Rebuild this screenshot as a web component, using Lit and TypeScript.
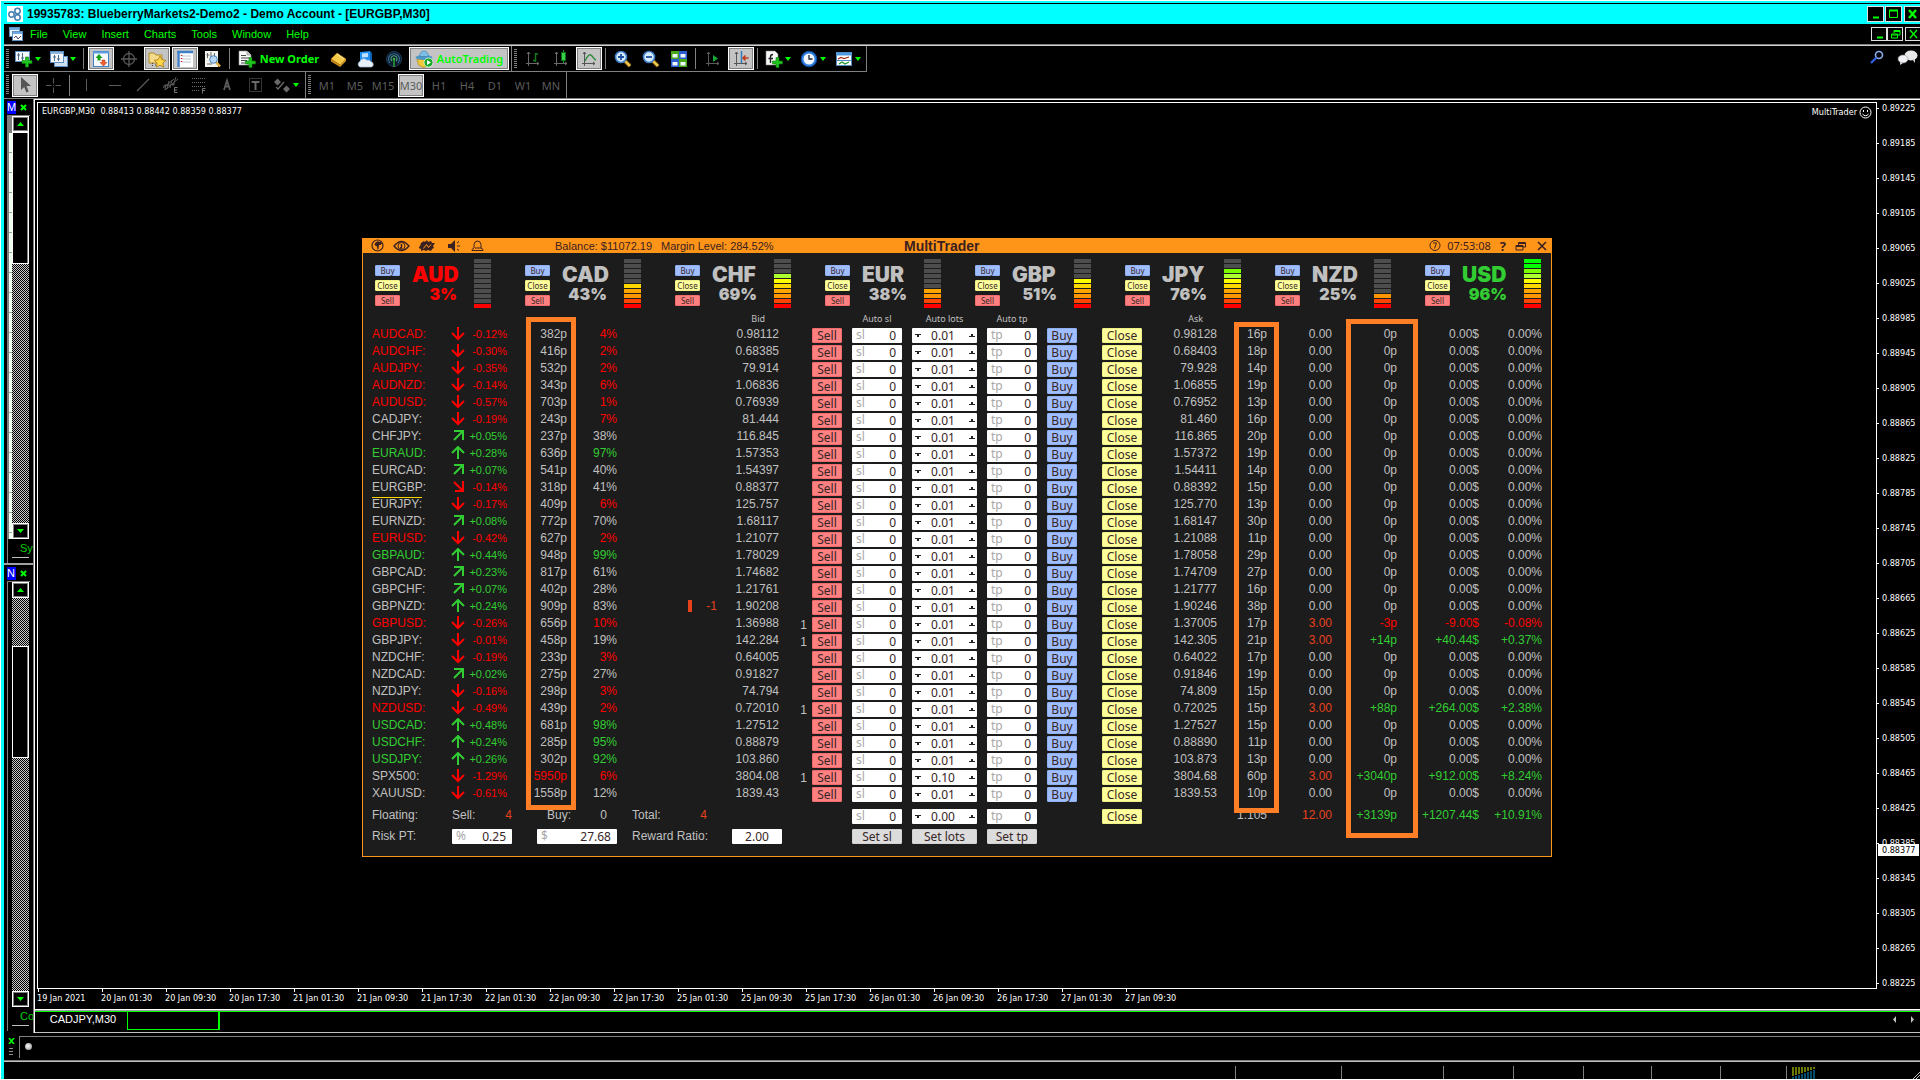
import { LitElement, html, css, svg, nothing, TemplateResult } from "lit";
import { customElement, property } from "lit/decorators.js";
import { classMap } from "lit/directives/class-map.js";

type Tone = "r" | "g" | "n";

interface Position {
  lots: string;
  pips: string;
  profit: string;
  pct: string;
}

interface Pair {
  symbol: string;
  tone: Tone;
  trend: "d" | "u" | "ne" | "se";
  change: string;
  range: string;
  strength: number;
  bid: string;
  ask: string;
  spread: string;
  count?: string;
  lots?: string;
  open?: Position;
  signal?: string;
  current?: boolean;
}

const pair = (line: string, extra: Partial<Pair> = {}): Pair => {
  const [symbol, tone, trend, change, range, strength, bid, ask, spread] = line.split(" ");
  return {
    symbol, change, range, bid, ask, spread,
    tone: tone as Tone,
    trend: trend as Pair["trend"],
    strength: Number(strength),
    ...extra,
  };
};

const PAIRS: Pair[] = [
  pair("AUDCAD r d -0.12% 382p 4 0.98112 0.98128 16p"),
  pair("AUDCHF r d -0.30% 416p 2 0.68385 0.68403 18p"),
  pair("AUDJPY r d -0.35% 532p 2 79.914 79.928 14p"),
  pair("AUDNZD r d -0.14% 343p 6 1.06836 1.06855 19p"),
  pair("AUDUSD r d -0.57% 703p 1 0.76939 0.76952 13p"),
  pair("CADJPY n d -0.19% 243p 7 81.444 81.460 16p"),
  pair("CHFJPY n ne +0.05% 237p 38 116.845 116.865 20p"),
  pair("EURAUD g u +0.28% 636p 97 1.57353 1.57372 19p"),
  pair("EURCAD n ne +0.07% 541p 40 1.54397 1.54411 14p"),
  pair("EURGBP n se -0.14% 318p 41 0.88377 0.88392 15p", { current: true }),
  pair("EURJPY n d -0.17% 409p 6 125.757 125.770 13p"),
  pair("EURNZD n ne +0.08% 772p 70 1.68117 1.68147 30p"),
  pair("EURUSD r d -0.42% 627p 2 1.21077 1.21088 11p"),
  pair("GBPAUD g u +0.44% 948p 99 1.78029 1.78058 29p"),
  pair("GBPCAD n ne +0.23% 817p 61 1.74682 1.74709 27p"),
  pair("GBPCHF n ne +0.07% 402p 28 1.21761 1.21777 16p"),
  pair("GBPNZD n u +0.24% 909p 83 1.90208 1.90246 38p", { signal: "-1" }),
  pair("GBPUSD r d -0.26% 656p 10 1.36988 1.37005 17p", { count: "1", open: { lots: "3.00", pips: "-3p", profit: "-9.00$", pct: "-0.08%" } }),
  pair("GBPJPY n d -0.01% 458p 19 142.284 142.305 21p", { count: "1", open: { lots: "3.00", pips: "+14p", profit: "+40.44$", pct: "+0.37%" } }),
  pair("NZDCHF n d -0.19% 233p 3 0.64005 0.64022 17p"),
  pair("NZDCAD n ne +0.02% 275p 27 0.91827 0.91846 19p"),
  pair("NZDJPY n d -0.16% 298p 3 74.794 74.809 15p"),
  pair("NZDUSD r d -0.49% 439p 2 0.72010 0.72025 15p", { count: "1", open: { lots: "3.00", pips: "+88p", profit: "+264.00$", pct: "+2.38%" } }),
  pair("USDCAD g u +0.48% 681p 98 1.27512 1.27527 15p"),
  pair("USDCHF g u +0.24% 285p 95 0.88879 0.88890 11p"),
  pair("USDJPY g u +0.26% 302p 92 103.860 103.873 13p"),
  pair("SPX500 n d -1.29% 5950p 6 3804.08 3804.68 60p", { count: "1", lots: "0.10", open: { lots: "3.00", pips: "+3040p", profit: "+912.00$", pct: "+8.24%" } }),
  pair("XAUUSD n d -0.61% 1558p 12 1839.43 1839.53 10p"),
];

const CURRENCIES: { name: string; pct: number; level: number; tone: Tone }[] = [
  { name: "AUD", pct: 3, level: 1, tone: "r" },
  { name: "CAD", pct: 43, level: 5, tone: "n" },
  { name: "CHF", pct: 69, level: 7, tone: "n" },
  { name: "EUR", pct: 38, level: 4, tone: "n" },
  { name: "GBP", pct: 51, level: 6, tone: "n" },
  { name: "JPY", pct: 76, level: 8, tone: "n" },
  { name: "NZD", pct: 25, level: 3, tone: "n" },
  { name: "USD", pct: 96, level: 10, tone: "g" },
];

const METER = ["#ff0000", "#ff4500", "#ff9500", "#ffa500", "#ffd700", "#ffff00", "#adff2f", "#7cfc00", "#00ff00", "#00ff00"];

const TIMES = [
  "19 Jan 2021", "20 Jan 01:30", "20 Jan 09:30", "20 Jan 17:30", "21 Jan 01:30", "21 Jan 09:30",
  "21 Jan 17:30", "22 Jan 01:30", "22 Jan 09:30", "22 Jan 17:30", "25 Jan 01:30", "25 Jan 09:30",
  "25 Jan 17:30", "26 Jan 01:30", "26 Jan 09:30", "26 Jan 17:30", "27 Jan 01:30", "27 Jan 09:30",
];

const PRICE_TOP = 0.89225;
const PRICE_STEP = 0.0004;
const PRICES = Array.from({ length: 26 }, (_, i) => (PRICE_TOP - i * PRICE_STEP).toFixed(5));
const PRICE_NOW = 0.88377;

const signTone = (s: string): Tone => (s.startsWith("-") ? "r" : s.startsWith("+") ? "g" : "n");

/* ---------- icons ---------- */

const axes = (c = "#6a6a6a") => svg`<path d="M4.500 2v14M2 13.500h13M3 4l1.500-2L6 4M13 12l2 1.500-2 1.500" fill="none" stroke=${c}/>`;
const lens = (mark: string) => svg`
  <path d="M11 11l5 5" stroke="#7a5a10" stroke-width="4"/><path d="M11 11l5 5" stroke="#f0c850" stroke-width="2.400"/>
  <circle cx="7" cy="7" r="5.500" fill="#d8ecff" stroke="#3f7fc8" stroke-width="1.600"/>
  <path d=${mark} stroke="#1f4f9f" stroke-width="1.800" fill="none"/>`;
const plus = (x: number, y: number) => svg`<g transform="translate(${x} ${y})"><path d="M3.500 0h3v3.500H10v3H6.500V10h-3V6.500H0v-3h3.500z" fill="#1fc41f" stroke="#0a7a0a" stroke-width=".6"/></g>`;

const ICONS: Record<string, TemplateResult<2>> = {
  newChart: svg`<rect x="0.500" y="1.500" width="14" height="10" fill="#f4f8fc" stroke="#5c8fc0"/><path d="M3.500 3v7M7.500 3v7M2 5h3M6 8h3" stroke="#4a6a8a" fill="none"/>${plus(7, 7)}`,
  profiles: svg`<rect x="4.500" y="6.500" width="13" height="10" fill="#cfe0f0" stroke="#5c8fc0"/><rect x="0.500" y="1.500" width="13" height="11" fill="#f4f8fc" stroke="#5c8fc0"/><path d="M1 3h12" stroke="#8fb8e0" stroke-width="2"/><path d="M4.500 5v6M8.500 5v6M3 7h3M7 9h3" stroke="#4a6a8a"/>`,
  market: svg`<rect x="1.500" y="1.500" width="15" height="15" fill="#f6faff" stroke="#3f7fc8"/><path d="M1 2.500h16" stroke="#5f9fe0" stroke-width="2"/><path d="M7 4l3.500 4H8.500v2.500h-3V8h-2z" fill="#18a018"/><path d="M11.500 16L8 12.500h2V10h3v2.500h2z" fill="#f06030" stroke="#b03010" stroke-width=".5"/>`,
  cross: svg`<circle cx="9" cy="9" r="5.500" fill="none" stroke="#5a5a5a" stroke-width="1.300"/><path d="M9 1v16M1 9h16" stroke="#5a5a5a" stroke-width="1.300"/>`,
  star: svg`<path d="M1 3h5l2 2h6v8H1z" fill="#f4dc8c" stroke="#b08820"/><path d="M4.500 13v4M7 15h2" stroke="#444" stroke-dasharray="1 1"/><path d="M12 6l1.800 3.700 4 .6-2.900 2.800.7 4-3.600-1.900L8.400 17l.7-4-2.900-2.700 4-.6z" fill="#ffd84a" stroke="#a87808" stroke-width=".8"/>`,
  navigator: svg`<rect x="1" y="1" width="16" height="16" fill="#fff"/><path d="M1 2h16M2.500 1v16" stroke="#3f7fc8" stroke-width="2.500"/><path d="M6 6h9M6 9h9M6 12h9" stroke="#b8c4d0"/><path d="M5.500 5v1M5.500 8v1M5.500 11v1" stroke="#d02020" stroke-width="1.500"/>`,
  tester: svg`<rect x="1" y="1" width="13" height="16" fill="#f4f4f0"/><path d="M3.500 3v5M2.500 5h3M7 2v5M10.500 3v4M3 14h5" stroke="#666"/><path d="M12 12l4 4.500" stroke="#e0b040" stroke-width="2.600"/><circle cx="9.500" cy="9.500" r="3.800" fill="#a8d0f8" fill-opacity=".85" stroke="#5080b8"/>`,
  order: svg`<path d="M1 1h8l4 4v10H1z" fill="#fafafa" stroke="#999" stroke-width=".6"/><path d="M9 1v4h4" fill="#ccc" stroke="#888" stroke-width=".6"/><path d="M3 5.500h5M3 8h8M3 10.500h6M3 13h4" stroke="#444"/>${plus(7.500, 7.500)}`,
  gold: svg`<path d="M2 9l6-6 9 6-6 6z" fill="#f4c848" stroke="#a87010" stroke-width=".8"/><path d="M2 9l9 6v2L2 11.500z" fill="#c88818"/><path d="M11 15l6-6v2l-6 6z" fill="#e0a428"/><path d="M8 4l7 5" stroke="#fff0a8"/>`,
  cloud: svg`<path d="M3 2l10-1v10H3z" fill="#1f8ff0"/><path d="M5 3.500l6-.5v4l-6 .5z" fill="#bfe0ff"/><path d="M13 1l2 2v9h-2z" fill="#0f5fb0"/><path d="M3 17a3 3 0 010-5.500 4 4 0 017-1.200 3.500 3.500 0 014 1.500 2.700 2.700 0 01.5 5.200z" fill="#e8f0fa" stroke="#a8bcd4" stroke-width=".7"/>`,
  signal: svg`<circle cx="9" cy="9" r="7.500" fill="#0c1c2c" stroke="#1c3c5c"/><path d="M5 13a5.500 5.500 0 118 0" fill="none" stroke="#3a6a90" stroke-width="1.200"/><path d="M7 11a3 3 0 114 0" fill="none" stroke="#4a9a80" stroke-width="1.200"/><circle cx="9" cy="9" r="1.300" fill="#40c040"/><path d="M9 9v8" stroke="#30a030" stroke-width="1.500"/>`,
  robot: svg`<path d="M2 9h14l-2.500 7L8 17.500 3.500 15z" fill="#f0c838" stroke="#a88010" stroke-width=".6"/><ellipse cx="9" cy="7.500" rx="8.500" ry="2.500" fill="#4f98c8"/><path d="M4.500 6.500Q5 1 9 1t4.500 5.500z" fill="#7cc0e8" stroke="#3878a8" stroke-width=".6"/><circle cx="13.500" cy="12.500" r="4.500" fill="#18a828" stroke="#e8ffe8" stroke-width=".8"/><path d="M12 10l4 2.500-4 2.500z" fill="#fff"/>`,
  bars: svg`${axes()}<path d="M11.500 3v9M11.500 4h2.500M9 10.500h2.500" stroke="#14781c" stroke-width="1.500"/>`,
  candles: svg`${axes()}<path d="M11.500 0v13" stroke="#18a828"/><rect x="9.500" y="2.500" width="4" height="8" fill="#38d048" stroke="#0c7018"/>`,
  line: svg`${axes("#555")}<path d="M5 11q4-9 7-5t4 4" fill="none" stroke="#2a8a3a" stroke-width="1.400"/>`,
  zoomIn: lens("M7 4v6M4 7h6"),
  zoomOut: lens("M4 7h6"),
  tile: svg`<rect x="1" y="1" width="8" height="8" fill="#48a818"/><rect x="9" y="1" width="8" height="8" fill="#2c5cd0"/><rect x="1" y="9" width="8" height="8" fill="#2c5cd0"/><rect x="9" y="9" width="8" height="8" fill="#48a818"/><path d="M2.500 4h5v3.500h-5zM10.500 4h5v3.500h-5zM2.500 12h5v3.500h-5zM10.500 12h5v3.500h-5z" fill="#eef6ff"/>`,
  scroll: svg`${axes("#5c5c5c")}<path d="M9 5l5 3.500L9 12z" fill="#18a838"/>`,
  shift: svg`${axes("#555")}<path d="M9.500 1v12" stroke="#2c7cc0" stroke-width="1.500"/><path d="M16.500 8h-5M13.500 5.500L11 8l2.500 2.500" fill="none" stroke="#c03818" stroke-width="1.500"/>`,
  indicator: svg`<path d="M1 1h9l3 3v11H1z" fill="#f8f8f8" stroke="#888" stroke-width=".6"/><path d="M5.500 13V7q0-2.500 2.500-2.500M3.500 8.500H8" stroke="#222" stroke-width="1.400" fill="none"/>${plus(7.500, 7.500)}`,
  clock: svg`<circle cx="9" cy="9" r="7.800" fill="#2f7fe0" stroke="#10489c"/><circle cx="9" cy="9" r="5.500" fill="#f4f8ff"/><path d="M9 5v4h3.500" fill="none" stroke="#223" stroke-width="1.300"/>`,
  template: svg`<rect x="1.500" y="2.500" width="15" height="13" fill="#fff" stroke="#4f88c0"/><path d="M1 4h16" stroke="#4f98e0" stroke-width="3"/><path d="M3 9l3-1.500 3 1 5-1.500" fill="none" stroke="#a02818" stroke-width="1.300"/><path d="M2 10.500h14" stroke="#4f88c0"/><path d="M4 14l3-2 3 2 4-2" fill="none" stroke="#189828" stroke-width="1.300"/>`,
  pointer: svg`<path d="M5 1v13l3.200-3 2.200 5.500 2.300-1L10.500 10H15z" fill="#555"/>`,
  plusThin: svg`<path d="M9.500 2v5.500M9.500 11.500V17M2 9.500h5.500M11.500 9.500H17M9 9.500h1" stroke="#5a5a5a"/>`,
  vline: svg`<path d="M8.500 3v12" stroke="#5a5a5a"/>`,
  hline: svg`<path d="M3 9.500h12" stroke="#5a5a5a"/>`,
  trend: svg`<path d="M3 15L15 3" stroke="#5a5a5a" stroke-width="1.300"/>`,
  channel: svg`<path d="M1 12L12 3M3 14L16 3M4 8l-1 6M7 5L5 13M10 4L8 12M14 1l-3 9M1 10l12-2" stroke="#5a5a5a"/><path d="M15.500 11.500h-3v5h3M12.500 14h2.500" stroke="#777" fill="none"/>`,
  fibo: svg`<path d="M2 2.500h13M2 6.500h13M2 10.500h13M2 14.500h8" stroke="#6a6a6a" stroke-dasharray="1 1"/><path d="M15.500 12.500h-3v5M12.500 14.500h2.500" stroke="#777" fill="none"/>`,
  letter: svg`<path d="M6 14L9 4.500 12 14M7 10.500h4" stroke="#5a5a5a" stroke-width="1.800" fill="none"/>`,
  label: svg`<rect x="3.500" y="2.500" width="12" height="13" fill="none" stroke="#6a6a6a" stroke-dasharray="1 1"/><path d="M5.500 6h8M9.500 6v8" stroke="#6a6a6a" stroke-width="2"/>`,
  shapes: svg`<path d="M1 6l3.500-3.500L8 6 4.500 9.500zM10 13l3.500-3.500L17 13l-3.500 3.500z" fill="#6a6a6a"/><path d="M3 11l2 2 6-7" stroke="#6a6a6a" fill="none" stroke-width="1.300"/>`,
};

const icon = (name: string) => html`<svg class="ico" width="18" height="18" viewBox="0 0 18 18" aria-hidden="true">${ICONS[name]}</svg>`;
const caret = html`<svg class="caret" width="6" height="4" viewBox="0 0 6 4" aria-hidden="true"><path d="M0 0h6L3 4z" fill="#00ff00"/></svg>`;

const TREND: Record<Pair["trend"], TemplateResult<2>> = {
  d: svg`<path d="M7 0v12M1 6l6 6 6-6"/>`,
  u: svg`<path d="M7 13V1M1 7l6-6 6 6"/>`,
  ne: svg`<path d="M3 11l9-9M3 2h9v9"/>`,
  se: svg`<path d="M3 2l9 9M12 1v10H4"/>`,
};

/* ---------- MultiTrader window ---------- */

@customElement("multi-trader")
export class MultiTrader extends LitElement {
  static styles = css`
    :host { display: block; position: relative; box-sizing: border-box; width: 1190px; border: 1px solid #ff9518; background: #1c1c1c; color: #c0c0c0; font: 12px/12px "Liberation Sans", Arial, sans-serif; }
    button, input { font: 12px/13px "Noto Sans", sans-serif; color: #372626; margin: 0; padding: 0; box-sizing: border-box; }
    button { display: block; height: 15px; border: 1px solid; border-radius: 1px; text-align: center; white-space: nowrap; }
    input { border: 0; background: transparent; min-width: 0; width: 100%; text-align: right; outline: 0; height: 15px; }
    .buy { background: #a0beff; border-color: #90b0f4; }
    .sell { background: #ff8080; border-color: #f06c6c; }
    .close { background: #ffff9c; border-color: #f0f088; }
    .set { background: #dcdcdc; border-color: #d2d2d2; width: 100%; }
    .r { color: #ff0000; } .g { color: #32cd32; } .n { color: #c0c0c0; } .o { color: #e8421c; }

    .bar { display: grid; grid-template-columns: 192px 349px 1fr auto; align-items: center; height: 14px; background: #ff9518; color: #3a2020; }
    .tools { display: flex; align-items: center; padding-left: 8px; gap: 9px; }
    .bar button { border: 0; background: none; height: 14px; display: flex; align-items: center; color: inherit; }
    .bar svg { display: block; }
    .money { display: flex; gap: 9px; font-size: 11px; }
    .money span { white-space: nowrap; }
    .name { font: 700 14px/14px "Liberation Sans", Arial, sans-serif; margin: 0; }
    .right { display: flex; align-items: center; gap: 9px; padding-right: 3px; font: 11px/14px "Noto Sans", sans-serif; }
    .time { display: flex; align-items: center; gap: 6px; }
    .bar .help { font: 700 13px/14px "Noto Sans", sans-serif; }

    .cards { display: flex; justify-content: space-between; padding: 6px 10px 0 12px; }
    .card { display: grid; grid-template-columns: 25px 45px 17px; column-gap: 12px; width: 116px; height: 50px; }
    .trio { display: grid; gap: 4px; align-content: start; padding-top: 6px; }
    .trio button { height: 11px; width: 25px; font-size: 8px; line-height: 9px; }
    .score { display: flex; flex-direction: column; align-items: flex-end; padding-top: 6px; font-family: Inter, "Liberation Sans", sans-serif; font-weight: 900; }
    .ccy { align-self: flex-start; font-size: 21px; line-height: 19px; }
    .pct { font-size: 16px; line-height: 20px; }
    .meter { display: grid; grid-auto-rows: 4px; gap: 1px; margin-left: 5px; width: 17px; }
    .meter i { background: #4d4d4d; }

    table { width: 1170px; margin: 0 9px; table-layout: fixed; border-collapse: collapse; border-spacing: 0; }
    th, td { padding: 0; text-align: right; vertical-align: top; font-weight: 400; white-space: nowrap; }
    thead th { height: 19px; font: 9px/19px "Noto Sans", sans-serif; }
    thead .mid { text-align: center; padding-right: 10px; }
    thead .inset { padding-right: 14px; }
    tbody tr { height: 17px; }
    tbody th { text-align: left; }
    .sym { display: block; }
    .sym.current { box-sizing: border-box; width: 50px; height: 17px; border-bottom: 1px solid #ffd700; }
    .chg { display: flex; justify-content: space-between; align-items: center; height: 12px; font-size: 11px; }
    .chg svg, .sig i { flex: none; }
    .chg svg { fill: none; stroke: currentColor; stroke-width: 2; }
    .sig { display: flex; justify-content: flex-end; gap: 14px; }
    .sig i { width: 4px; height: 12px; background: #e8421c; }
    .count { padding-right: 5px; line-height: 16px; }
    .w30 { width: 30px; } .w40 { width: 40px; }
    .box { display: flex; align-items: center; box-sizing: border-box; height: 15px; background: #fff; border-radius: 1px; padding: 0 6px 0 4px; color: #a8a8a8; font: 12px/14px "Noto Sans", sans-serif; }
    .in { padding-right: 10px; }
    .lots { padding: 0 2px 0 3px; }
    .lots input { text-align: center; padding-right: 4px; }
    .lots button { border: 0; background: none; width: 6px; flex: none; display: flex; align-items: center; }
    tfoot td { height: 20px; }
    tfoot tr:first-child td { padding-top: 5px; height: 15px; }
    tfoot tr:last-child td { padding-top: 5px; height: 27px; }
    tfoot .in { padding-right: 10px; }
    .sums, .risk { display: grid; text-align: left; line-height: 13px; }
    .sums { grid-template-columns: 80px 60px 60px 75px; }
    .sums > :nth-child(3) { margin-left: 35px; margin-right: -35px; }
    .sums > :nth-child(4) { margin-left: 60px; margin-right: -60px; }
    .sums div { display: flex; justify-content: space-between; }
    .risk { grid-template-columns: 80px 60px 80px 75px 50px; line-height: 15px; column-gap: 0; }
    .risk > :nth-child(3) { margin-left: 25px; margin-right: -25px; }
    .risk > :nth-child(4) { margin-left: 40px; }
    .risk > :nth-child(5) { margin-left: 65px; margin-right: -65px; }
    .ratio { padding: 0; }
    .ratio input { text-align: center; }
    .mark { position: absolute; box-sizing: border-box; border: 5px solid #ff7f27; pointer-events: none; }
    .mark.range { left: 163px; top: 78px; width: 50px; height: 493px; }
    .mark.spread { left: 871px; top: 83px; width: 45px; height: 491px; }
    .mark.pips { left: 983px; top: 80px; width: 72px; height: 519px; }
  `;

  private widths = [79, 56, 60, 50, 100, 62, 33, 40, 60, 75, 60, 55, 50, 65, 50, 65, 65, 82, 63];

  private field(prefix: string, value: string) {
    return html`<label class="box"><span>${prefix}</span><input .value=${value} /></label>`;
  }

  private lots(value: string) {
    return html`<div class="box lots">
      <button aria-label="Less"><svg width="6" height="3" viewBox="0 0 6 3"><path d="M0 0h6v1H4v2H2V1H0z" fill="#222"/></svg></button>
      <input aria-label="Lots" .value=${value} />
      <button aria-label="More"><svg width="6" height="3" viewBox="0 0 6 3"><path d="M0 3h6V2H4V0H2v2H0z" fill="#222"/></svg></button>
    </div>`;
  }

  private row(p: Pair) {
    const s: Tone = p.strength <= 10 ? "r" : p.strength >= 90 ? "g" : "n";
    const o = p.open;
    return html`<tr>
      <th scope="row"><span class=${classMap({ sym: true, [p.tone]: true, current: !!p.current })}>${p.symbol}:</span></th>
      <td><span class="chg ${signTone(p.change)}"><svg width="16" height="14" viewBox="0 0 16 14">${TREND[p.trend]}</svg>${p.change}</span></td>
      <td class=${p.range === "5950p" ? "r" : "n"}>${p.range}</td>
      <td class=${s}>${p.strength}%</td>
      <td class="o">${p.signal ? html`<span class="sig"><i></i>${p.signal}</span>` : nothing}</td>
      <td>${p.bid}</td>
      <td class="count">${p.count ?? nothing}</td>
      <td><button class="sell w30">Sell</button></td>
      <td class="in">${this.field("sl", "0")}</td>
      <td class="in">${this.lots(p.lots ?? "0.01")}</td>
      <td class="in">${this.field("tp", "0")}</td>
      <td><button class="buy w30">Buy</button></td>
      <td><button class="close w40">Close</button></td>
      <td>${p.ask}</td>
      <td>${p.spread}</td>
      <td class=${o ? "o" : "n"}>${o ? o.lots : "0.00"}</td>
      <td class=${signTone(o?.pips ?? "")}>${o?.pips ?? "0p"}</td>
      <td class=${signTone(o?.profit ?? "")}>${o?.profit ?? "0.00$"}</td>
      <td class=${signTone(o?.pct ?? "")}>${o?.pct ?? "0.00%"}</td>
    </tr>`;
  }

  render() {
    return html`
      <header class="bar">
        <div class="tools">
          <button aria-label="Sessions"><svg width="13" height="13" viewBox="0 0 13 13"><circle cx="6.500" cy="6.500" r="5.500" fill="none" stroke="#3a2020" stroke-width="1.200"/><path d="M4 4l3-2 1 1 1.500-.5L11 4.500 9.500 6H8l-.5 4L6.500 11 6 7.500 3.500 6z" fill="#3a2020"/></svg></button>
          <button aria-label="View"><svg width="17" height="12" viewBox="0 0 17 12"><path d="M1 6q7.500-9 15 0-7.500 9-15 0z" fill="none" stroke="#3a2020" stroke-width="1.300"/><circle cx="8.500" cy="6" r="3.500" fill="none" stroke="#3a2020"/><path d="M8.500 4v4H7" fill="none" stroke="#3a2020" stroke-width="1.500"/></svg></button>
          <button aria-label="Trade"><svg width="16" height="12" viewBox="0 0 16 12"><path d="M2 3l3-2 1 1 2-2 1 2 3-1 1 2 3 0-2 3 1 2-2 1-1 2-3-1-2 1-2-1-3 1 0-2-3-1 2-2z" fill="#3a2020"/><path d="M4.500 8.500l3-4 2 3 2.500-3" fill="none" stroke="#ff9518"/></svg></button>
          <button aria-label="Sound"><svg width="18" height="12" viewBox="0 0 18 12"><path d="M4 4h3l4-4v12L7 8H4z" fill="#3a2020"/><path d="M13 6h3M13 3l2-1.500M13 9l2 1.500" stroke="#3a2020"/></svg></button>
          <button aria-label="Alerts"><svg width="13" height="12" viewBox="0 0 13 12"><path d="M1 10.500h11v-1L10 8V4.500Q9.500 1 6.500 1T3 4.500V8L1 9.500zM4 8h6" fill="none" stroke="#3a2020"/></svg></button>
        </div>
        <div class="money"><span>Balance: $11072.19</span><span>Margin Level: 284.52%</span></div>
        <h1 class="name">MultiTrader</h1>
        <div class="right">
          <span class="time"><svg width="12" height="13" viewBox="0 0 12 13"><circle cx="6" cy="6.500" r="5" fill="none" stroke="#3a2020"/><path d="M4 4h3.500L5.500 9.500" fill="none" stroke="#3a2020"/></svg>07:53:08</span>
          <button class="help" aria-label="Help">?</button>
          <button aria-label="Restore"><svg width="12" height="10" viewBox="0 0 12 10"><path d="M3.500 4V1.500h7V6H8M1 4.500h7V9H1zM1 5.500h7M3 2.500h8" fill="none" stroke="#3a2020"/></svg></button>
          <button aria-label="Close window"><svg width="12" height="10" viewBox="0 0 12 10"><path d="M2 1l8 8M10 1L2 9" stroke="#3a2020" stroke-width="1.600"/></svg></button>
        </div>
      </header>
      <section class="cards">
        ${CURRENCIES.map((c) => html`<div class="card">
          <div class="trio"><button class="buy">Buy</button><button class="close">Close</button><button class="sell">Sell</button></div>
          <div class="score ${c.tone}"><span class="ccy">${c.name}</span><span class="pct">${c.pct}%</span></div>
          <div class="meter">${METER.map((_, i) => {
            const seg = 9 - i;
            return seg < c.level ? html`<i style="background:${METER[seg]}"></i>` : html`<i></i>`;
          })}</div>
        </div>`)}
      </section>
      <table>
        <colgroup>${this.widths.map((w) => html`<col style="width:${w}px" />`)}</colgroup>
        <thead><tr>
          <th colspan="5"></th><th class="inset" scope="col">Bid</th><th colspan="2"></th>
          <th class="mid" scope="col">Auto sl</th><th class="mid" scope="col">Auto lots</th><th class="mid" scope="col">Auto tp</th>
          <th colspan="2"></th><th class="inset" scope="col">Ask</th><th colspan="5"></th>
        </tr></thead>
        <tbody>${PAIRS.map((p) => this.row(p))}</tbody>
        <tfoot>
          <tr>
            <td colspan="8"><div class="sums">
              <span>Floating:</span>
              <div><span>Sell:</span><span class="o">4</span></div>
              <div><span>Buy:</span><span>0</span></div>
              <div><span>Total:</span><span class="o">4</span></div>
            </div></td>
            <td class="in">${this.field("sl", "0")}</td>
            <td class="in">${this.lots("0.00")}</td>
            <td class="in">${this.field("tp", "0")}</td>
            <td></td>
            <td><button class="close w40">Close</button></td>
            <td></td>
            <td>1.105</td><td class="o">12.00</td><td class="g">+3139p</td><td class="g">+1207.44$</td><td class="g">+10.91%</td>
          </tr>
          <tr>
            <td colspan="8"><div class="risk">
              <span>Risk PT:</span>
              ${this.field("%", "0.25")}
              ${this.field("$", "27.68")}
              <label for="ratio">Reward Ratio:</label>
              <div class="box ratio"><input id="ratio" .value=${"2.00"} /></div>
            </div></td>
            <td class="in"><button class="set">Set sl</button></td>
            <td class="in"><button class="set">Set lots</button></td>
            <td class="in"><button class="set">Set tp</button></td>
            <td colspan="8"></td>
          </tr>
        </tfoot>
      </table>
      <div class="mark range"></div><div class="mark spread"></div><div class="mark pips"></div>
    `;
  }
}

/* ---------- collapsed side panel ---------- */

@customElement("dock-panel")
export class DockPanel extends LitElement {
  static styles = css`
    :host { display: flex; flex-direction: column; box-sizing: border-box; padding: 2px 4px 0 3px; min-height: 0; }
    .head { display: flex; justify-content: space-between; align-items: center; height: 13px; padding-right: 2px; }
    .tag { background: #0000ff; color: #fff; width: 9px; overflow: hidden; font: 11px/13px "Liberation Sans", sans-serif; }
    button { padding: 0; margin: 0; border: 0; background: #000; display: grid; place-items: center; }
    .body { flex: 1; display: flex; border: solid #808080; border-width: 1px 0 0 1px; min-height: 0; margin-right: -1px; margin-top: 1px; }
    .rule { width: 4px; box-sizing: border-box; border-top: 17px solid #808080; border-left: 1px solid #808080; background: repeating-linear-gradient(#f0fff0 0 19px, #a0a0a0 19px 20px); }
    .rule.off { border: 0; background: none; }
    .scroll { flex: 1; display: flex; flex-direction: column; margin-right: 1px; }
    .scroll button { height: 16px; flex: none; border: 1px solid #fff; box-shadow: inset 0 0 0 1px #808080; }
    .track { display: block; background: conic-gradient(#c8c8c8 25%, #000 0 50%, #c8c8c8 0 75%, #000 0) 0 0 / 2px 2px; }
    .thumb { border: 1px solid #fff; box-shadow: inset -1px 0 0 #808080; background: #000; }
    .tab { height: 19px; padding-left: 12px; color: #00d000; font: 11px/18px "Liberation Sans", sans-serif; border-left: 1px solid #808080; }
    .tab span { display: block; border-bottom: 1px solid #c0c0c0; height: 18px; margin-left: -8px; padding-left: 8px; }
    .foot { height: 5px; border-left: 1px solid #808080; box-sizing: border-box; }
  `;
  @property() tag = "";
  @property() tab = "";
  @property({ type: Boolean }) ruler = false;
  @property({ type: Number }) before = 0;
  @property({ type: Number }) thumb = 1;
  @property({ type: Number }) after = 1;

  render() {
    return html`
      <div class="head"><span class="tag">${this.tag}</span>
        <button aria-label="Close panel"><svg width="7" height="7" viewBox="0 0 7 7"><path d="M1 1l5 5M6 1L1 6" stroke="#0f0" stroke-width="2"/></svg></button></div>
      <div class="body"><div class="rule ${this.ruler ? "" : "off"}"></div>
        <div class="scroll">
          <button aria-label="Scroll up"><svg width="7" height="4"><path d="M0 4h7L3.500 0z" fill="#0f0"/></svg></button>
          <div class="track" style="flex:${this.before}"></div>
          <div class="thumb" style="flex:${this.thumb}"></div>
          <div class="track" style="flex:${this.after}"></div>
          <button aria-label="Scroll down"><svg width="7" height="4"><path d="M0 0h7L3.500 4z" fill="#0f0"/></svg></button>
        </div></div>
      <div class="tab"><span>${this.tab}</span></div><div class="foot"></div>`;
  }
}

/* ---------- terminal shell ---------- */

@customElement("app-root")
export class AppRoot extends LitElement {
  static styles = css`
    :host { display: flex; flex-direction: column; box-sizing: border-box; min-height: 100vh; background: #000; color: #fff; border: solid #fff; border-width: 1px 0 1px 1px; font: 11px/13px "Liberation Sans", Arial, sans-serif; overflow: hidden; }
    button { font: inherit; color: inherit; margin: 0; padding: 0; background: none; border: 0; box-sizing: border-box; }
    svg { display: block; flex: none; }
    .frame { flex: 1; display: flex; flex-direction: column; border: solid #00ffff; border-width: 2px 0 0 3px; }
    .title { display: flex; align-items: center; height: 20px; margin-top: 1px; background: #00ffff; color: #000; padding-left: 3px; gap: 4px; }
    h1 { font: 700 12px/20px "Liberation Sans", Arial, sans-serif; margin: 0; flex: 1; white-space: nowrap; }
    .win { display: flex; margin-right: -1px; }
    .win button { width: 17px; height: 16px; background: #000; border: 1px solid #fff; border-right-color: #808080; border-bottom-color: #808080; outline: 1px solid #e0e0e0; outline-offset: -1px; display: grid; place-items: center; margin-left: 1px; }
    .win button:last-child { margin-left: 2px; }
    .win.small button { width: 16px; height: 14px; margin-left: 0; }
    .win.small button:last-child { margin-left: 2px; }
    .menu { display: flex; align-items: center; height: 20px; padding-left: 5px; }
    .menu nav { display: flex; gap: 15px; flex: 1; padding-left: 7px; }
    .menu a { color: #00ff00; text-decoration: none; font-size: 11px; line-height: 20px; }
    .bars { border: solid; border-width: 1px 0; border-color: #808080 #fff #808080; box-shadow: inset 0 1px #d0d0d0; padding-top: 1px; display: flex; }
    .rows { flex: 1; }
    .strip { display: flex; align-items: center; gap: 2px; padding-left: 2px; width: fit-content; box-sizing: border-box; height: 26px; }
    .strip.top { border: solid #808080; border-width: 0 1px 1px 0; padding-right: 1px; }
    .strip.low { border-right: 1px solid #808080; padding-right: 2px; }
    .grip { width: 3px; height: 20px; background: repeating-linear-gradient(#808080 0 1px, #000 1px 2px); flex: none; margin-right: 1px; }
    .sep { width: 1px; height: 21px; background: #808080; margin: 0 2px 0 1px; flex: none; }
    .edge { width: 1px; align-self: stretch; background: #808080; flex: none; }
    .tb { width: 26px; height: 23px; display: flex; align-items: center; justify-content: center; flex: none; color: #5c5c5c; }
    .tb.on { background: #c4c4c4; border: 1px solid #fff; box-shadow: inset 0 0 0 1px #808080; }
    .tb.drop { width: 33px; justify-content: flex-start; padding-left: 3px; gap: 2px; }
    .tb.text { color: #00ff00; font: 700 11px/21px "Noto Sans", sans-serif; gap: 4px; white-space: nowrap; }
    .tb.order { width: 89px; }
    .tb.auto { width: 100px; font-weight: 600; }
    .tf { font: 11px/23px "Noto Sans", sans-serif; }
    .extras { display: flex; gap: 13px; padding: 4px 1px 0 0; align-items: flex-start; }
    .work { flex: 1; display: flex; min-height: 0; }
    .dock { width: 29px; border-right: 1px solid #808080; display: flex; flex-direction: column; flex: none; overflow: hidden; }
    .dock dock-panel:first-child { flex: 465; }
    .dock dock-panel:last-child { flex: 467; border-top: 2px solid #a0a0a0; padding-bottom: 2px; }
    .stage { flex: 1; display: flex; flex-direction: column; border-left: 1px solid #fff; border-top: 1px solid #fff; min-width: 0; }
    .chart { flex: 1; display: grid; grid-template-columns: 1fr 43px; grid-template-rows: 1fr 20px; padding: 2px 0 0 2px; font: 9px/13px "DejaVu Sans Condensed", "DejaVu Sans", sans-serif; }
    .plot { border: 1px solid #fff; box-sizing: border-box; display: grid; grid-template-rows: auto 1fr; }
    .info { display: flex; justify-content: space-between; padding: 2px 4px 0; height: 14px; white-space: pre; }
    .expert { display: flex; gap: 2px; align-items: center; }
    .canvas { display: grid; place-content: center; padding-bottom: 13px; }
    .scale { position: relative; display: flex; flex-direction: column; justify-content: space-between; margin-bottom: -1px; }
    .scale span { padding-left: 5px; position: relative; }
    .scale span::before { content: ""; position: absolute; left: 0; top: 6px; width: 2px; height: 1px; background: #fff; }
    .scale .now { position: absolute; left: 1px; right: 1px; padding-left: 4px; background: #fff; color: #000; line-height: 12px; height: 12px; }
    .times { display: flex; grid-column: 1 / -1; }
    .times span { width: 64px; position: relative; padding-top: 3px; white-space: nowrap; flex: none; }
    .times span::before { content: ""; position: absolute; left: 1px; top: 0; width: 1px; height: 3px; background: #fff; }
    .tabs { display: flex; height: 21px; border-top: 1px solid #fff; border-bottom: 1px solid #c0c0c0; box-shadow: inset 0 1px #a0a0a0; padding-top: 1px; }
    .tabs button { width: 92px; border-top: 1px solid #00ff00; height: 19px; font-size: 11px; color: #fff; padding: 0 0 3px 4px; }
    .tabs .picked { border: 1px solid #00ff00; border-right-width: 2px; width: 93px; }
    .rest { flex: 1; border-top: 1px solid #00ff00; display: flex; justify-content: flex-end; align-items: center; gap: 15px; padding-right: 6px; height: 15px; }
    .term { display: flex; padding: 3px 0 3px 4px; height: 22px; }
    .side { width: 11px; padding-top: 2px; display: grid; align-content: start; gap: 4px; }
    .side i { width: 4px; height: 9px; background: repeating-linear-gradient(#909090 0 1px, #000 1px 3px); margin-left: 1px; }
    .log { flex: 1; border: solid #808080; border-width: 1px 0 0 1px; padding: 6px 5px; }
    .dot { display: block; width: 7px; height: 7px; border-radius: 50%; background: radial-gradient(circle at 3px 3px, #fff, #808080); }
    .status { display: flex; justify-content: flex-end; align-items: flex-end; height: 17px; border-top: 1px solid #c0c0c0; box-shadow: 0 -1px #808080; }
    .status i { height: 13px; box-sizing: border-box; border-left: 1px solid #808080; }
    .conn { width: 121px; display: flex; align-items: flex-end; border-left: 1px solid #808080; height: 13px; padding-left: 5px; }
  `;

  private win(small: boolean) {
    return html`<div class="win ${small ? "small" : ""}">
      <button aria-label="Minimize"><svg width="11" height="10" viewBox="0 0 11 10"><path d="M3 8.500h6" stroke="#0f0" stroke-width="2"/></svg></button>
      <button aria-label=${small ? "Restore" : "Maximize"}><svg width="11" height="10" viewBox="0 0 11 10">${small
        ? svg`<path d="M4 4V1.500h6V6H8M1.500 5h6v4h-6zM4 2.500h6M1.500 6h6" fill="none" stroke="#0f0"/>`
        : svg`<path d="M1.500 1.500h8v7h-8z" fill="none" stroke="#0f0"/><path d="M1 1.500h9" stroke="#0f0" stroke-width="2"/>`}</svg></button>
      <button aria-label="Close"><svg width="11" height="10" viewBox="0 0 11 10"><path d="M2 1l7 8M9 1L2 9" stroke="#0f0" stroke-width=${small ? "1.300" : "2.400"}/></svg></button>
    </div>`;
  }

  private tb(name: string, label: string, on = false) {
    return html`<button class="tb ${on ? "on" : ""}" aria-label=${label}>${icon(name)}</button>`;
  }

  private drop(name: string, label: string) {
    return html`<button class="tb drop" aria-label=${label}>${icon(name)}${caret}</button>`;
  }

  render() {
    const sep = html`<span class="sep"></span>`;
    const grip = html`<span class="grip"></span>`;
    const nowAt = (PRICE_TOP - PRICE_NOW) / (PRICE_STEP * 25);
    return html`<div class="frame">
      <header class="title">
        <svg width="16" height="16" viewBox="0 0 16 16"><rect width="16" height="16" fill="#fff"/><g fill="none" stroke="#3f7fb0" stroke-width="1.500"><circle cx="4.500" cy="8.500" r="2.700"/><circle cx="10.500" cy="5" r="2.700"/><circle cx="10.500" cy="11.500" r="2.700"/></g></svg>
        <h1>19935783: BlueberryMarkets2-Demo2 - Demo Account - [EURGBP,M30]</h1>
        ${this.win(false)}
      </header>
      <div class="menu">
        <svg width="14" height="14" viewBox="0 0 14 14"><rect x="0.500" y="0.500" width="10" height="9" fill="#eef6ff" stroke="#5c8fc0"/><rect x="3.500" y="4.500" width="10" height="9" fill="#fff" stroke="#5c8fc0"/><path d="M1 2h9M4 6h9" stroke="#6fa8e0" stroke-width="2"/><path d="M5 11l2-2 2 3 3-3" fill="none" stroke="#446"/></svg>
        <nav>${["File", "View", "Insert", "Charts", "Tools", "Window", "Help"].map((m) => html`<a href="#">${m}</a>`)}</nav>
        ${this.win(true)}
      </div>
      <div class="bars">
        <div class="rows">
          <div class="strip top">
            ${grip}${this.drop("newChart", "New chart")}${this.drop("profiles", "Profiles")}${sep}
            ${this.tb("market", "Market Watch", true)}${this.tb("cross", "Data Window")}${this.tb("star", "Navigator", true)}${this.tb("navigator", "Terminal", true)}${this.tb("tester", "Strategy Tester")}${sep}
            <button class="tb text order">${icon("order")}New Order</button>
            ${this.tb("gold", "MetaEditor")}${this.tb("cloud", "Virtual hosting")}${this.tb("signal", "Signals")}
            <button class="tb text auto on">${icon("robot")}AutoTrading</button>
            <span class="edge"></span>${grip}
            ${this.tb("bars", "Bar chart")}${this.tb("candles", "Candlesticks")}${this.tb("line", "Line chart", true)}${sep}
            ${this.tb("zoomIn", "Zoom in")}${this.tb("zoomOut", "Zoom out")}${this.tb("tile", "Tile windows")}${sep}
            ${this.tb("scroll", "Auto scroll")}${this.tb("shift", "Chart shift", true)}${sep}
            ${this.drop("indicator", "Indicators")}${this.drop("clock", "Periods")}${this.drop("template", "Templates")}
          </div>
          <div class="strip low">
            ${grip}${this.tb("pointer", "Cursor", true)}${this.tb("plusThin", "Crosshair")}${sep}
            ${this.tb("vline", "Vertical line")}${this.tb("hline", "Horizontal line")}${this.tb("trend", "Trendline")}${this.tb("channel", "Channel")}${this.tb("fibo", "Fibonacci")}${this.tb("letter", "Text")}${this.tb("label", "Text label")}${this.drop("shapes", "Arrows")}
            <span class="edge"></span>${grip}
            ${["M1", "M5", "M15", "M30", "H1", "H4", "D1", "W1", "MN"].map((t) => html`<button class="tb tf ${t === "M30" ? "on" : ""}">${t}</button>`)}
          </div>
        </div>
        <div class="extras">
          <button aria-label="Search"><svg width="14" height="14" viewBox="0 0 14 14"><circle cx="9" cy="5" r="3.500" fill="none" stroke="#8fb0f0" stroke-width="1.600"/><path d="M6.500 7.500L1 13" stroke="#2f60d8" stroke-width="2.400"/></svg></button>
          <button aria-label="Chat"><svg width="22" height="16" viewBox="0 0 22 16"><ellipse cx="14" cy="5.500" rx="6.500" ry="5" fill="#e8e8ea"/><path d="M15 9l3 4v-4z" fill="#d0d0d4"/><ellipse cx="6" cy="9" rx="5" ry="4" fill="#f0f0f4" stroke="#888" stroke-width=".6"/><path d="M3 12v3l3-2z" fill="#d8d8dc"/></svg></button>
        </div>
      </div>
      <main class="work">
        <aside class="dock">
          <dock-panel tag="M" tab="Sy" ruler .before=${0} .thumb=${131} .after=${260}></dock-panel>
          <dock-panel tag="N" tab="Co" .before=${48} .thumb=${110} .after=${232}></dock-panel>
        </aside>
        <div class="stage">
          <div class="chart">
            <div class="plot">
              <div class="info"><span>EURGBP,M30  0.88413 0.88442 0.88359 0.88377</span>
                <span class="expert">MultiTrader<svg width="13" height="13" viewBox="0 0 13 13"><circle cx="6.500" cy="6.500" r="5.500" fill="none" stroke="#fff"/><path d="M4.500 4v2M8.500 4v2M3.500 8q3 3.500 6 0" fill="none" stroke="#fff"/></svg></span></div>
              <div class="canvas"><multi-trader></multi-trader></div>
            </div>
            <div class="scale">${PRICES.map((p) => html`<span>${p}</span>`)}
              <span class="now" style="top:calc((100% - 13px) * ${nowAt})">${PRICE_NOW}</span></div>
            <div class="times">${TIMES.map((t) => html`<span>${t}</span>`)}</div>
          </div>
          <div class="tabs"><button>CADJPY,M30</button><button class="picked" aria-label="EURGBP,M30"></button>
            <div class="rest"><svg width="3" height="7"><path d="M3 0v7L0 3.500z" fill="#c0c0c0"/></svg><svg width="3" height="7"><path d="M0 0v7l3-3.500z" fill="#c0c0c0"/></svg></div></div>
        </div>
      </main>
      <section class="term">
        <div class="side"><button aria-label="Close terminal"><svg width="7" height="6" viewBox="0 0 7 6"><path d="M1 0l5 6M6 0L1 6" stroke="#0f0" stroke-width="1.600"/></svg></button><i></i></div>
        <div class="log"><span class="dot"></span></div>
      </section>
      <footer class="status">
        ${[106, 102, 70, 70, 68, 69, 66].map((w) => html`<i style="width:${w}px"></i>`)}
        <div class="conn"><svg width="24" height="12" viewBox="0 0 24 12">${[0, 1, 2, 3, 4, 5, 6, 7].map((k) => svg`<rect x=${k * 3} y="0" width="2" height=${9 - k} fill="#6a7a00"/><rect x=${k * 3} y=${10 - k} width="2" height=${2 + k} fill="#004a6a"/>`)}</svg></div>
        <svg width="7" height="7" viewBox="0 0 7 7"><path d="M0 7l7-7M3 7l4-4" stroke="#c0c0c0"/></svg>
      </footer>
    </div>`;
  }
}
